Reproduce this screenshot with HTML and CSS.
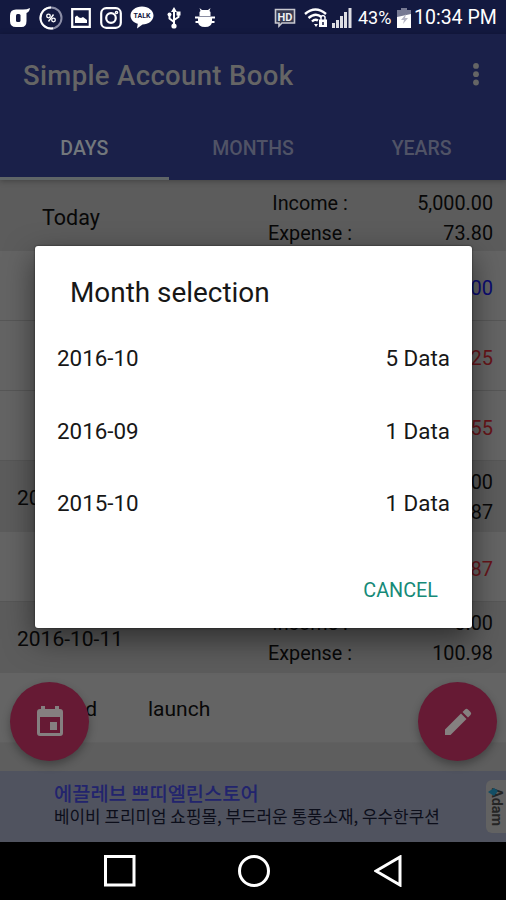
FILE: index.html
```html
<!DOCTYPE html>
<html lang="en">
<head>
<meta charset="utf-8">
<title>Simple Account Book</title>
<link rel="stylesheet" href="styles.css">
</head>
<body>
<div class="phone">
  <header class="status">
    <div class="notices">
      <svg width="21" height="20" viewBox="0 0 21 20"><path d="M7 1.500h7q4 0 7-1.500-.5 4-3.500 5V13q0 6-5 6H7q-6 0-6-6V7.500q0-6 6-6z" fill="#fff"/><rect x="7" y="6" width="4.500" height="8" rx="1.500" fill="#131940"/></svg>
      <svg width="24" height="24" viewBox="0 0 24 24" fill="none" stroke="#fff"><circle cx="12" cy="12" r="10.500" stroke="#8b8da6" stroke-width="2"/><path d="M14 22.300A10.500 10.500 0 1 1 12 1.500" stroke-width="2"/><circle cx="9.500" cy="10" r="1.800" stroke-width="1.300"/><circle cx="14.500" cy="14" r="1.800" stroke-width="1.300"/><path d="M14.500 8.500l-5 7" stroke-width="1.400"/></svg>
      <svg width="20" height="20" viewBox="0 0 20 20"><path d="M1.200 1.200h17.600v17.600H1.200z" fill="none" stroke="#fff" stroke-width="2.200"/><path d="M4 15V9l2-1.500 2 2 2 .5 2-1 4 3v3z" fill="#fff"/></svg>
      <svg width="22" height="22" viewBox="0 0 22 22" fill="none" stroke="#fff" stroke-width="2.200"><rect x="1.200" y="1.200" width="19.600" height="19.600" rx="5"/><circle cx="11" cy="11" r="4.800"/><circle cx="16.500" cy="5.500" r=".7"/></svg>
      <svg width="24" height="23" viewBox="0 0 24 23"><path d="M12 .5c6.500 0 11.500 4 11.500 9s-5 9-11 9l-5.500 4 .8-4.800C3.500 16.500.5 13.500.5 9.500c0-5 5-9 11.500-9z" fill="#fff"/><text x="12" y="12" class="talk" text-anchor="middle">TALK</text></svg>
      <svg class="usb" width="14" height="22" viewBox="0 0 14 22" fill="none" stroke="#fff" stroke-width="2"><path d="M7 3v16M2.500 7v4.500L7 15M11.500 6v4L7 13"/><path d="M7 0l3 5H4zM9.500 4.500h4v4h-4z" fill="#fff" stroke="none"/><circle cx="2.500" cy="7.500" r="2" fill="#fff" stroke="none"/><circle cx="7" cy="19" r="2.600" fill="#fff" stroke="none"/></svg>
      <svg class="debug" width="20" height="20" viewBox="0 0 20 20"><path d="M4.500 8V4l1-1-1-3 2.500 2h6L15.500 0l-1 3 1 1v4zM3 9h14v4q0 6-7 6t-7-6z" fill="#fff"/><path d="M0 9.500h20M.5 14h19" fill="none" stroke="#fff" stroke-width="2"/></svg>
    </div>
    <div class="signals">
      <svg width="22" height="20" viewBox="0 0 22 20"><path d="M1.500 1.500h19v13.500H8l-3 3v-3H1.500z" fill="#35384f" stroke="#c8c8cf" stroke-width="1.600"/><text x="11" y="12.500" text-anchor="middle" class="hd">HD</text></svg>
      <svg class="wifi" width="24" height="20" viewBox="0 0 24 20" fill="none" stroke="#fff" stroke-width="2.400"><path d="M1 6q10.500-9 21 0M4.500 10q7-6 13 -1M8 13.500q3-3 6-1"/><path d="M10 16l2 3 2-3z" fill="#fff" stroke="none"/><rect x="15" y="11.500" width="8" height="7.500" fill="#fff" stroke="none"/><path d="M17 12V9q2-3 4 0v3" stroke-width="1.500"/><path d="M19 14v3" stroke="#131940" stroke-width="1.500"/></svg>
      <svg class="bars" width="20" height="20" viewBox="0 0 20 20" fill="#dedee4"><path d="M0 15h3v5H0zM4 12h3v8H4zM8 8h3v12H8zM12 4h3v16h-3zM16.500 0h3v20h-3z"/></svg>
      <span class="percent">43%</span>
      <svg class="battery" width="14" height="20" viewBox="0 0 14 20"><path d="M4 0h6v2h4v8H0V2h4z" fill="#777a93"/><path d="M0 9l14-3v14H0z" fill="#fff"/><path d="M9 6l-5 6h3l-1 4 5-6H8z" fill="#b5b6c5"/></svg>
      <span class="clock">10:34 PM</span>
    </div>
  </header>
  <div class="appbar">
    <div class="toolbar">
      <h1>Simple Account Book</h1>
      <svg width="8" height="24" viewBox="0 0 8 24" fill="#656565"><circle cx="4" cy="2.900" r="2.900"/><circle cx="4" cy="11.200" r="2.900"/><circle cx="4" cy="19.500" r="2.900"/></svg>
    </div>
    <nav class="tabs"><span class="tab active">DAYS</span><span class="tab">MONTHS</span><span class="tab">YEARS</span></nav>
  </div>
  <main class="list">
    <section class="day today"><span class="date">Today</span><div class="labels"><span>Income :</span><span>Expense :</span></div><div class="sums"><span>5,000.00</span><span>73.80</span></div></section>
    <div class="entry"><span class="amount income">5,000.00</span></div>
    <div class="entry"><span class="amount">22.25</span></div>
    <div class="entry"><span class="amount">51.55</span></div>
    <section class="day"><span class="date">2016-10-12</span><div class="labels"><span>Income :</span><span>Expense :</span></div><div class="sums"><span>0.00</span><span>14.87</span></div></section>
    <div class="entry"><span class="amount">14.87</span></div>
    <section class="day"><span class="date">2016-10-11</span><div class="labels"><span>Income :</span><span>Expense :</span></div><div class="sums"><span>0.00</span><span>100.98</span></div></section>
    <div class="entry last"><span class="category">Food</span><span>launch</span></div>
  </main>
  <aside class="ad">
    <div class="copy"><strong>에끌레브 쁘띠엘린스토어</strong><span>베이비 프리미엄 쇼핑몰, 부드러운 통풍소재, 우수한쿠션</span></div>
    <div class="badge"><svg width="18" height="48" viewBox="0 0 18 48"><text class="adam" transform="translate(5 5) rotate(90)" textLength="38" lengthAdjust="spacingAndGlyphs">Adam</text><path d="M1 9l6-4 4 3-4 5z" fill="#124e65"/></svg></div>
  </aside>
  <footer class="keys">
    <svg width="32" height="32" viewBox="0 0 32 32"><path d="M1.500 1.500h28.500v28.500H1.500z"/></svg>
    <svg width="32" height="32" viewBox="0 0 32 32"><circle cx="16" cy="16" r="14.500"/></svg>
    <svg class="back" width="28" height="32" viewBox="0 0 28 32"><path d="M2 16L26 2v28z"/></svg>
  </footer>
  <div class="fab left"><svg width="26" height="31" viewBox="0 0 26 31"><path fill-rule="evenodd" d="M3 3h1V0h4v3h10V0h4v3h1q3 0 3 3v21q0 3-3 3H3q-3 0-3-3V6q0-3 3-3zm0 8v16h20V11zm10 5h7v8h-7z" fill="#858080"/></svg></div>
  <div class="fab right"><svg width="28" height="28" viewBox="0 0 28 28" fill="#858080"><path d="M1 21.500L17 5.500l5.500 5.500-16 16H1zM18.500 4l2.500-2.500q1.500-1.500 3 0L26.500 4q1.500 1.500 0 3L24 9.500z"/></svg></div>
  <div class="dialog" role="dialog">
    <h2>Month selection</h2>
    <div class="choice"><span>2016-10</span><span>5 Data</span></div>
    <div class="choice"><span>2016-09</span><span>1 Data</span></div>
    <div class="choice"><span>2015-10</span><span>1 Data</span></div>
    <div class="actions"><button>CANCEL</button></div>
  </div>
</div>
</body>
</html>
```
FILE: styles.css
```css
* { box-sizing: border-box; }
body { margin: 0; background: #000; font-family: Roboto, "Noto Sans CJK KR", sans-serif; }
svg { display: block; flex: none; }
.phone { position: relative; width: 506px; height: 900px; overflow: hidden; display: flex; flex-direction: column; background: #5e5e5e; color: #080808; }
.status { height: 34px; flex: none; display: flex; justify-content: space-between; align-items: center; padding: 1px 10px 0; background: #131940; color: #fff; }
.notices { display: flex; align-items: center; gap: 8.500px; margin-left: -1px; }
.usb { margin-left: 4px; }
.debug { margin-left: 6px; }
.talk { font: 700 7px Roboto, sans-serif; fill: #131940; }
.hd { font: 700 11px Roboto, sans-serif; fill: #eee; }
.signals { display: flex; align-items: center; font-size: 19px; white-space: nowrap; }
.wifi { margin-left: 8px; }
.bars { margin-left: 4px; }
.percent { margin-left: 6px; width: 33px; font-size: 18px; }
.battery { margin-left: 6px; }
.clock { margin-left: 3px; width: 82px; font-size: 19.500px; }
.appbar { height: 146px; flex: none; display: flex; flex-direction: column; background: #1a2049; z-index: 1; box-shadow: 0 1px 6px rgba(0,0,0,.3); }
.toolbar { height: 82px; display: flex; align-items: center; justify-content: space-between; padding: 0 26px 0 23px; }
h1 { margin: 0; font-size: 27.500px; letter-spacing: .350px; font-weight: 500; color: #656565; white-space: nowrap; }
.tabs { flex: 1; display: grid; grid-template-columns: 1fr 1fr 1fr; }
.tab { display: flex; align-items: center; justify-content: center; font-size: 19.500px; font-weight: 500; color: #505366; padding-top: 3px; border-bottom: 3px solid transparent; }
.tab.active { color: #72777c; border-color: #5f6567; }
.list { flex: 1; display: flex; flex-direction: column; font-size: 20px; }
.day { height: 71px; display: grid; grid-template-columns: 250px 120px 1fr; align-items: center; padding: 0 13px 0 0; background: #5c5c5c; }
.date { padding-left: 17px; font-size: 21px; padding-top: 3px; }
.today .date { padding: 4px 0 0 42px; font-size: 21.500px; }
.labels, .sums { display: flex; flex-direction: column; line-height: 30px; font-size: 19.800px; padding-top: 3px; }
.today .labels, .today .sums { padding-top: 6px; }
.labels { text-align: center; }
.sums { text-align: right; }
.entry { height: 70px; display: flex; align-items: center; padding: 4px 13px 0; background: #646464; border-bottom: 1px solid #575757; font-size: 20px; }
.amount { margin-left: auto; color: #671419; }
.income { color: #0b0b72; }
.last { font-size: 21px; padding: 3px 13px 0 50px; border-color: #606060; }
.category { width: 98px; }
.ad { height: 71px; flex: none; display: flex; justify-content: space-between; align-items: center; padding-left: 54px; background: #50535f; font-family: "Noto Sans CJK KR", sans-serif; }
.copy { display: flex; flex-direction: column; white-space: nowrap; padding-bottom: 5px; }
.copy strong { font-size: 19.800px; line-height: 23px; font-weight: 500; color: #22246d; }
.copy span { font-size: 16.900px; line-height: 23px; font-weight: 400; color: #0c0e1a; }
.badge { width: 20px; height: 53px; border-radius: 6px 0 0 6px; background: #626262; display: flex; align-items: center; justify-content: center; }
.adam { font: 700 14px Roboto, sans-serif; fill: #252525; }
.keys { height: 58px; flex: none; display: flex; align-items: center; padding-left: 104px; background: #000; gap: 102px; }
.keys svg { fill: none; stroke: #fff; stroke-width: 3; }
.back { margin-left: 2px; }
.fab { position: absolute; top: 682px; width: 79px; height: 79px; border-radius: 50%; background: #661a34; display: grid; place-items: center; box-shadow: 0 4px 8px rgba(0,0,0,.3); }
.left { left: 10px; }
.right { right: 9px; }
.dialog { position: absolute; z-index: 2; left: 35px; top: 246px; width: 437px; height: 382px; border-radius: 3px; background: #fff; box-shadow: 0 11px 30px rgba(0,0,0,.5), 0 0 2px rgba(0,0,0,.7); color: #171717; display: flex; flex-direction: column; }
h2 { margin: 0; height: 76px; padding: 30px 0 0 35px; font-size: 27.900px; line-height: 34px; font-weight: 400; white-space: nowrap; }
.choice { height: 72.500px; display: flex; align-items: center; justify-content: space-between; padding: 0 22px; font-size: 22.400px; }
.actions { flex: 1; display: flex; justify-content: flex-end; align-items: center; padding: 13px 34px 0 0; }
button { padding: 0; border: 0; background: none; font: 400 19.800px Roboto, sans-serif; color: #168a78; }
```
